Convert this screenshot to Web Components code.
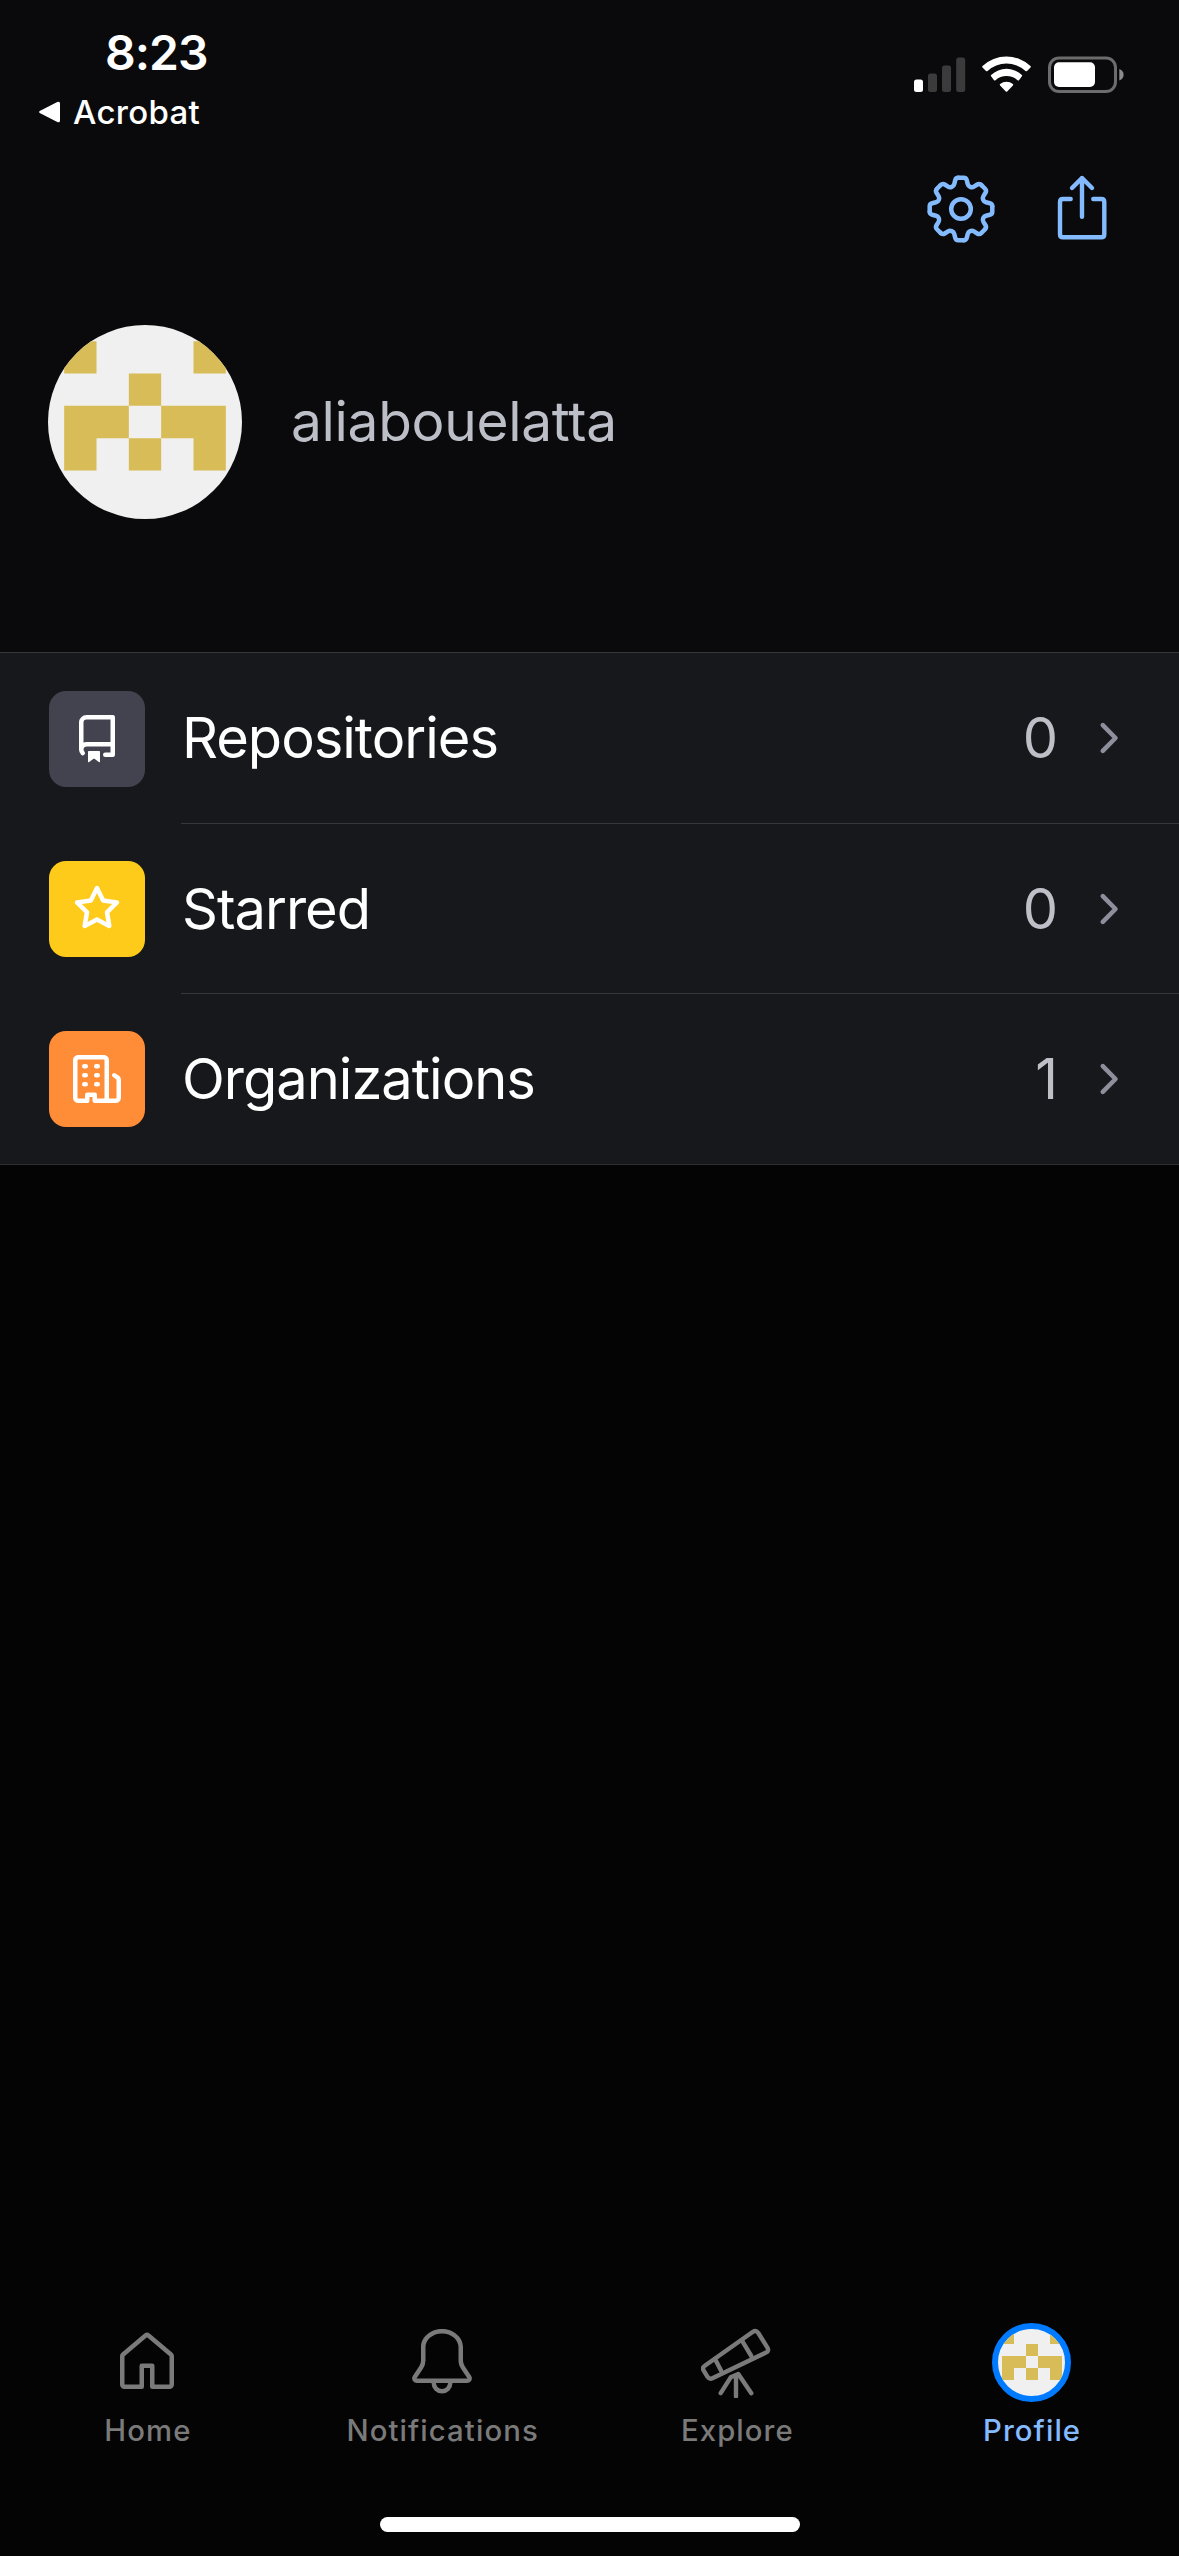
<!DOCTYPE html>
<html lang="en">
<head>
<meta charset="UTF-8">
<title>Profile</title>
<style>
  body {
    margin: 0;
    background: #040404;
    color: #fff;
    font-family: Inter, "Liberation Sans", sans-serif;
  }
</style>
</head>
<body>

<profile-screen>
  <status-bar slot="status" time="8:23">Acrobat</status-bar>
  <profile-header slot="header">aliabouelatta</profile-header>
  <menu-row icon="repo" color="#42434f" count="0">Repositories</menu-row>
  <menu-row icon="star" color="#ffcb1a" count="0">Starred</menu-row>
  <menu-row icon="organization" color="#ff8c37" count="1">Organizations</menu-row>
  <tab-item slot="tabs" icon="home">Home</tab-item>
  <tab-item slot="tabs" icon="bell">Notifications</tab-item>
  <tab-item slot="tabs" icon="telescope">Explore</tab-item>
  <tab-item slot="tabs" active>Profile</tab-item>
</profile-screen>

<script>
// One eighth of the gear outline, repeated around the centre
const tooth = 'M-2.7 -31.3H2.7Q5.2 -31.3 5.8 -28.8L6.7 -25C7.3 -22.4 10.7 -21 12.9 -22.4L16.3 -24.5Q18.5 -25.8 20.2 -24';
const teeth = [0, 1, 2, 3, 4, 5, 6, 7]
  .map(i => `<path d="${tooth}" transform="rotate(${i * 45})"/>`).join('');

// viewBox and markup of every icon
const ICONS = {
  gear: ['-36 -36 72 72', `<g fill="none" stroke="currentColor" stroke-width="4.5" stroke-linecap="round" stroke-linejoin="round">${teeth}<circle r="9.8"/></g>`],
  share: ['0 0 72 72', '<path fill="none" stroke="currentColor" stroke-width="4.4" stroke-linecap="round" stroke-linejoin="round" d="M24.7 26H17Q14 26 14 29V61.3Q14 64.3 17 64.3H55.3Q58.3 64.3 58.3 61.3V29Q58.3 26 55.3 26H47.3M36 5V43.7M26 15L36 5L46 15"/>'],
  repo: ['0 0 16 16', '<path fill="currentColor" fill-rule="evenodd" d="M2 2.5A2.5 2.5 0 014.5 0h8.75a.75.75 0 01.75.75v12.5a.75.75 0 01-.75.75h-2.5a.75.75 0 110-1.5h1.75v-2h-8a1 1 0 00-.714 1.7.75.75 0 01-1.072 1.05A2.495 2.495 0 012 11.5v-9zm10.5-1V9h-8c-.356 0-.694.074-1 .208V2.5a1 1 0 011-1h8zM5 12.25v3.25a.25.25 0 00.4.2l1.45-1.087a.25.25 0 01.3 0L8.6 15.7a.25.25 0 00.4-.2v-3.25a.25.25 0 00-.25-.25h-3.5a.25.25 0 00-.25.25z"/>'],
  star: ['0 0 16 16', '<path fill="currentColor" fill-rule="evenodd" d="M8 .25a.75.75 0 01.673.418l1.882 3.815 4.21.612a.75.75 0 01.416 1.279l-3.046 2.97.719 4.192a.75.75 0 01-1.088.791L8 12.347l-3.766 1.98a.75.75 0 01-1.088-.79l.72-4.194L.818 6.374a.75.75 0 01.416-1.28l4.21-.611L7.327.668A.75.75 0 018 .25zm0 2.445L6.615 5.5a.75.75 0 01-.564.41l-3.097.45 2.24 2.184a.75.75 0 01.216.664l-.528 3.084 2.769-1.456a.75.75 0 01.698 0l2.77 1.456-.53-3.084a.75.75 0 01.216-.664l2.24-2.183-3.096-.45a.75.75 0 01-.564-.41L8 2.694v.001z"/>'],
  organization: ['0 0 16 16', '<path fill="currentColor" d="M1.75 16A1.75 1.75 0 0 1 0 14.25V1.75C0 .784.784 0 1.75 0h8.5C11.216 0 12 .784 12 1.75v12.5c0 .085-.006.168-.018.25h2.268a.25.25 0 0 0 .25-.25V8.285a.25.25 0 0 0-.111-.208l-1.055-.703a.749.749 0 1 1 .832-1.248l1.055.703c.487.325.779.871.779 1.456v5.965A1.75 1.75 0 0 1 14.25 16h-3.5a.766.766 0 0 1-.197-.026c-.099.017-.2.026-.303.026h-3a.75.75 0 0 1-.75-.75V14h-1v1.25a.75.75 0 0 1-.75.75Zm-.25-1.75c0 .138.112.25.25.25H4v-1.25a.75.75 0 0 1 .75-.75h2.5a.75.75 0 0 1 .75.75v1.25h2.25a.25.25 0 0 0 .25-.25V1.75a.25.25 0 0 0-.25-.25h-8.5a.25.25 0 0 0-.25.25ZM3.75 6h.5a.75.75 0 0 1 0 1.5h-.5a.75.75 0 0 1 0-1.5ZM3 3.75A.75.75 0 0 1 3.75 3h.5a.75.75 0 0 1 0 1.5h-.5A.75.75 0 0 1 3 3.75Zm4 3A.75.75 0 0 1 7.75 6h.5a.75.75 0 0 1 0 1.5h-.5A.75.75 0 0 1 7 6.75ZM7.75 3h.5a.75.75 0 0 1 0 1.5h-.5a.75.75 0 0 1 0-1.5ZM3 9.75A.75.75 0 0 1 3.75 9h.5a.75.75 0 0 1 0 1.5h-.5A.75.75 0 0 1 3 9.75ZM7.75 9h.5a.75.75 0 0 1 0 1.5h-.5a.75.75 0 0 1 0-1.5Z"/>'],
  home: ['0 0 24 24', '<path fill="currentColor" fill-rule="evenodd" d="M11.03 2.59a1.501 1.501 0 0 1 1.94 0l7.5 6.363a1.5 1.5 0 0 1 .53 1.144V19.5a1.5 1.5 0 0 1-1.5 1.5h-5.75a.75.75 0 0 1-.75-.75V14h-2v6.25a.75.75 0 0 1-.75.75H4.5A1.5 1.5 0 0 1 3 19.5v-9.403c0-.44.194-.859.53-1.144ZM12 3.734l-7.5 6.363V19.5h5v-6.25a.75.75 0 0 1 .75-.75h3.5a.75.75 0 0 1 .75.75v6.25h5v-9.403Z"/>'],
  bell: ['0 0 24 24', '<path fill="currentColor" fill-rule="evenodd" d="M12 1C8.318 1 5 3.565 5 7v4.539a3.25 3.25 0 01-.546 1.803l-2.2 3.299A1.518 1.518 0 003.519 19H8.5a3.5 3.5 0 107 0h4.982a1.518 1.518 0 001.263-2.36l-2.2-3.298A3.25 3.25 0 0119 11.539V7c0-3.435-3.319-6-7-6zM6.5 7c0-2.364 2.383-4.5 5.5-4.5s5.5 2.136 5.5 4.5v4.539c0 .938.278 1.854.798 2.635l2.199 3.299a.017.017 0 01.003.01l-.001.006-.004.006-.006.004-.007.001H3.518l-.007-.001-.006-.004-.004-.006-.001-.007.003-.01 2.2-3.298a4.75 4.75 0 00.797-2.635V7zM14 19h-4a2 2 0 104 0z"/>'],
  telescope: ['0 0 72 72', '<g fill="none" stroke="currentColor" stroke-width="4.4" stroke-linecap="round" stroke-linejoin="round"><path d="M3.8 39.7L51.6 6Q55 3.7 57.3 7L66.4 21.6Q68.3 25 65 26.6L11.4 52.2Q8.4 53.6 6.5 50.8L2.6 44.4Q1 41.6 3.8 39.7Z"/><path d="M14 33L20 44.5M41 14.7L50.3 30"/><path d="M19.7 67.2L29.7 51.3L37.3 48L50.3 67.2M35 50.5V70.5"/></g>'],
  chevron: ['0 0 22 36', '<path fill="none" stroke="currentColor" stroke-width="4.6" stroke-linecap="round" stroke-linejoin="round" d="M4.8 5.2L17.5 18L4.8 30.8"/>']
};

// Icon picked by name; its size comes from the host box
class AppIcon extends HTMLElement {
  constructor() {
    super();
    this.attachShadow({ mode: 'open' });
  }

  connectedCallback() {
    const [box, markup] = ICONS[this.getAttribute('name')];
    this.shadowRoot.innerHTML = `
      <style>
        :host { display: block; flex: none; width: 72px; height: 72px; }
        svg { display: block; width: 100%; height: 100%; }
      </style>
      <svg viewBox="${box}">${markup}</svg>
    `;
  }
}

// Identicon: 5x5 cells with half a cell of margin
class UserAvatar extends HTMLElement {
  constructor() {
    super();
    this.attachShadow({ mode: 'open' });
  }

  connectedCallback() {
    this.shadowRoot.innerHTML = `
      <style>
        :host { display: flex; flex: none; align-items: center; justify-content: center; box-sizing: border-box; width: 194px; height: 194px; border-radius: 50%; overflow: hidden; background: #f0f0f0; }
        :host([ring]) { width: 79px; height: 79px; border: 6px solid #007aff; }
        svg { display: block; flex: none; width: 194px; height: 194px; }
        :host([ring]) svg { width: 72px; height: 72px; }
      </style>
      <svg viewBox="0 0 12 12"><path fill="#d8bc57" d="M1 1h2v2H1zM9 1h2v2H9zM5 3h2v2H5zM1 5h4v2H3v2H1zM7 5h4v4H9V7H7zM5 7h2v2H5z"/></svg>
    `;
  }
}

class StatusBar extends HTMLElement {
  constructor() {
    super();
    this.attachShadow({ mode: 'open' });
  }

  connectedCallback() {
    this.shadowRoot.innerHTML = `
      <style>
        :host { display: flex; justify-content: space-between; box-sizing: border-box; height: 160px; padding: 23px 54px 0 38px; }
        .time { padding-left: 67px; font-size: 48px; font-weight: 600; line-height: 60px; letter-spacing: -1px; }
        .back { display: flex; align-items: center; gap: 12px; margin-top: 9px; font-size: 33px; font-weight: 450; line-height: 40px; letter-spacing: .3px; }
        .back svg { width: 23px; height: 24px; }
        .system { display: flex; align-items: flex-start; margin-top: 32px; }
        svg { display: block; }
        .wifi { margin-left: 16px; }
        .battery { margin-left: 16px; }
      </style>
      <div>
        <div class="time">${this.getAttribute('time')}</div>
        <div class="back">
          <svg viewBox="0 0 23 24"><path fill="#fff" d="M1.7 11L19.3 2Q22 .8 22 3.6V20.4Q22 23.2 19.3 22L1.7 13Q.3 12 1.7 11Z"/></svg>
          <slot></slot>
        </div>
      </div>
      <div class="system">
        <svg width="52" height="38" viewBox="0 0 52 38">
          <rect x="0" y="24.5" width="9" height="12.5" rx="2.5" fill="#fff"/>
          <g fill="#3b3b3c">
            <rect x="14" y="18.5" width="9" height="18.5" rx="2.5"/>
            <rect x="28" y="10.5" width="9" height="26.5" rx="2.5"/>
            <rect x="42.2" y="2.5" width="9" height="34.5" rx="2.5"/>
          </g>
        </svg>
        <svg class="wifi" width="50" height="38" viewBox="0 0 50 38">
          <path fill="#fff" d="M.5 12.4Q-.2 11.7.5 11A35 35 0 0 1 48.5 11Q49.2 11.7 48.5 12.4L45 15.9Q44.3 16.6 43.5 15.9A28 28 0 0 0 5.5 15.9Q4.7 16.6 4 15.9ZM9.1 21.3Q8.4 20.6 9.1 19.9A22.5 22.5 0 0 1 39.9 19.9Q40.6 20.6 39.9 21.3L37 25.2Q36.3 25.9 35.5 25.2A16.5 16.5 0 0 0 13.5 25.2Q12.7 25.9 12 25.2ZM18.1 30.4Q17.4 29.7 18.1 29A10.5 10.5 0 0 1 30.9 29Q31.6 29.7 30.9 30.4L25.2 36.5Q24.5 37.1 23.8 36.5Z"/>
        </svg>
        <svg class="battery" width="77" height="40" viewBox="0 0 77 40">
          <rect x="1.5" y="3" width="66" height="33.5" rx="9.5" fill="none" stroke="#6c6c6d" stroke-width="3"/>
          <rect x="6" y="7.3" width="41" height="24.6" rx="5" fill="#fff"/>
          <path d="M71.3 14Q75.6 15.6 75.6 19.7Q75.6 23.8 71.3 25.4Z" fill="#8b8b8c"/>
        </svg>
      </div>
    `;
  }
}

class ProfileHeader extends HTMLElement {
  constructor() {
    super();
    this.attachShadow({ mode: 'open' });
  }

  connectedCallback() {
    this.shadowRoot.innerHTML = `
      <style>
        :host { display: block; padding: 13px 61px 133px 48px; }
        .actions { display: flex; justify-content: flex-end; gap: 49px; color: #84bbff; }
        .user { display: flex; align-items: center; gap: 49px; margin-top: 80px; }
        .name { padding-bottom: 2px; color: #bcbec8; font-size: 55px; line-height: 70px; letter-spacing: -.3px; }
      </style>
      <div class="actions">
        <app-icon name="gear"></app-icon>
        <app-icon name="share"></app-icon>
      </div>
      <div class="user">
        <user-avatar></user-avatar>
        <div class="name"><slot></slot></div>
      </div>
    `;
  }
}

// List row: coloured icon tile, label, count and chevron
class MenuRow extends HTMLElement {
  constructor() {
    super();
    this.attachShadow({ mode: 'open' });
  }

  connectedCallback() {
    this.shadowRoot.innerHTML = `
      <style>
        :host { display: flex; align-items: center; gap: 36px; padding-left: 49px; }
        .tile { display: flex; flex: none; align-items: center; justify-content: center; width: 96px; height: 96px; border-radius: 17px; background: ${this.getAttribute('color')}; }
        .tile app-icon { width: 48px; height: 48px; }
        .body { display: flex; flex: 1; align-items: center; align-self: stretch; box-sizing: border-box; padding-right: 59px; border-bottom: 1px solid #37383c; font-size: 56px; line-height: 70px; }
        :host(:last-of-type) .body { border-bottom: 0; }
        .label { flex: 1; padding-left: 1px; letter-spacing: -1px; }
        .count { color: #bfc0c7; }
        .body app-icon { width: 22px; height: 36px; margin-left: 40px; color: #8d8f9c; }
      </style>
      <div class="tile"><app-icon name="${this.getAttribute('icon')}"></app-icon></div>
      <div class="body">
        <div class="label"><slot></slot></div>
        <div class="count">${this.getAttribute('count')}</div>
        <app-icon name="chevron"></app-icon>
      </div>
    `;
  }
}

class TabItem extends HTMLElement {
  constructor() {
    super();
    this.attachShadow({ mode: 'open' });
  }

  connectedCallback() {
    const icon = this.getAttribute('icon');
    this.shadowRoot.innerHTML = `
      <style>
        :host { display: flex; flex-direction: column; align-items: center; gap: 11px; color: #7a7a7a; }
        :host([active]) { color: #84bbff; }
        .icon { display: flex; align-items: center; height: 80px; }
        .label { padding-left: 1px; font-size: 29.3px; font-weight: 450; line-height: 36px; letter-spacing: 1.1px; }
      </style>
      <div class="icon">${icon ? `<app-icon name="${icon}"></app-icon>` : '<user-avatar ring></user-avatar>'}</div>
      <div class="label"><slot></slot></div>
    `;
  }
}

class ProfileScreen extends HTMLElement {
  constructor() {
    super();
    this.attachShadow({ mode: 'open' });
  }

  connectedCallback() {
    this.shadowRoot.innerHTML = `
      <style>
        :host { display: flex; flex-direction: column; box-sizing: border-box; width: 1179px; height: 2556px; padding-bottom: 24px; background: #040404; }
        header { box-sizing: border-box; height: 652px; background: #0a0a0c; }
        main { display: grid; grid-template-rows: 171px 170px 170px; background: #17181c; border-top: 1px solid #37383c; border-bottom: 1px solid #2d2e31; }
        nav { display: grid; grid-template-columns: repeat(4, 1fr); margin-top: auto; }
        .indicator { width: 420px; height: 15px; margin: 68px auto 0; border-radius: 8px; background: #fff; }
      </style>
      <header>
        <slot name="status"></slot>
        <slot name="header"></slot>
      </header>
      <main><slot></slot></main>
      <nav><slot name="tabs"></slot></nav>
      <div class="indicator"></div>
    `;
  }
}

customElements.define('app-icon', AppIcon);
customElements.define('user-avatar', UserAvatar);
customElements.define('status-bar', StatusBar);
customElements.define('profile-header', ProfileHeader);
customElements.define('menu-row', MenuRow);
customElements.define('tab-item', TabItem);
customElements.define('profile-screen', ProfileScreen);
</script>
</body>
</html>
